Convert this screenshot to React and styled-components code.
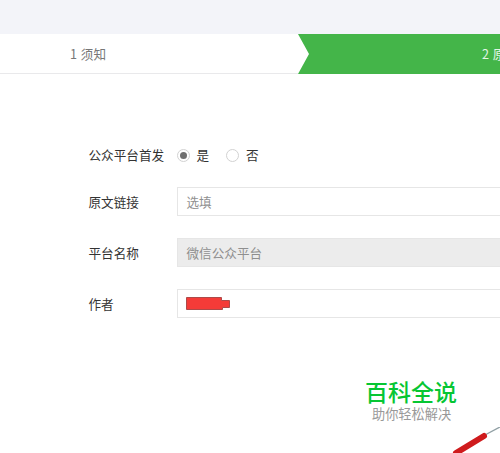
import React from "react";
import styled, { createGlobalStyle } from "styled-components";

const GlobalStyle = createGlobalStyle`
	* {
		box-sizing: border-box;
	}
	body {
		margin: 0;
		overflow: hidden;
		background: #fff;
		font-family: "Noto Sans CJK SC", sans-serif;
		font-size: 12.6px;
		color: #333;
	}
`;

const Page = styled.div`
	position: relative;
	width: 500px;
	height: 453px;
	overflow: hidden;
`;

const TopBand = styled.div`
	height: 34px;
	background: #f3f4f9;
`;

const Steps = styled.div`
	display: flex;
	height: 40px;
`;

const Step = styled.div`
	flex: none;
	width: ${(p) => (p.$active ? "202px" : "298px")};
	padding-left: ${(p) => (p.$active ? "184px" : "70px")};
	line-height: 40px;
	word-spacing: 1px;
	white-space: nowrap;
	overflow: hidden;
	color: ${(p) => (p.$active ? "#e4f6e4" : "#777")};
	background: ${(p) => (p.$active ? "#44b549" : "#fff")};
	border: solid ${(p) => (p.$active ? "#5aa65e" : "#e9e9eb")};
	border-width: ${(p) => (p.$active ? "0" : "0 0 1px")};
	clip-path: ${(p) =>
		p.$active ? "polygon(0 0, 100% 0, 100% 100%, 0 100%, 11px 50%)" : "none"};
`;

const Form = styled.form`
	display: flex;
	flex-direction: column;
	gap: 22px;
	padding: 71px 0 0 88.5px;
`;

const Row = styled.div`
	display: flex;
	align-items: center;
	height: ${(p) => p.$height || "29px"};
`;

const Label = styled.label`
	flex: none;
	width: 88px;
	line-height: 18px;
	white-space: nowrap;
`;

const Field = styled.div`
	flex: 1;
	display: flex;
	align-items: center;
	height: 29px;
	padding-left: 9px;
	border: 1px solid #e6e6e6;
	border-right: none;
	background: ${(p) => (p.$disabled ? "#ececec" : "#fff")};
	color: #8f8f8f;
`;

const Option = styled.span`
	display: flex;
	align-items: center;
	gap: 7px;
	margin-right: 17px;
	line-height: 18px;
`;

const Radio = styled.span`
	display: grid;
	place-items: center;
	width: 13px;
	height: 13px;
	border: 1px solid #d2d2d2;
	border-radius: 50%;

	&::after {
		content: "";
		width: 7px;
		height: 7px;
		border-radius: 50%;
		background: ${(p) => (p.$checked ? "#707070" : "transparent")};
	}
`;

const Redacted = styled.svg`
	display: block;
	margin-left: -1px;
`;

const Watermark = styled.div`
	position: absolute;
	left: 365px;
	top: 374px;
	white-space: nowrap;
`;

const Brand = styled.div`
	font-size: 23px;
	font-weight: 500;
	line-height: 34px;
	color: #06c633;
`;

const Slogan = styled.div`
	padding-left: 7px;
	font-size: 13.2px;
	line-height: 11px;
	color: #999;
`;

const Pen = styled.svg`
	position: absolute;
	right: 0;
	bottom: 0;
`;

const options = [
	{ text: "是", checked: true },
	{ text: "否", checked: false },
];

const App = () => {
	return (
		<Page>
			<GlobalStyle />
			<TopBand />
			<Steps>
				<Step>1 须知</Step>
				<Step $active>2 原</Step>
			</Steps>
			<Form>
				<Row $height="20px">
					<Label>公众平台首发</Label>
					{options.map((el) => (
						<Option key={el.text}>
							<Radio $checked={el.checked} />
							{el.text}
						</Option>
					))}
				</Row>
				<Row>
					<Label>原文链接</Label>
					<Field>选填</Field>
				</Row>
				<Row>
					<Label>平台名称</Label>
					<Field $disabled>微信公众平台</Field>
				</Row>
				<Row>
					<Label>作者</Label>
					<Field>
						<Redacted width="44" height="15">
							<path
								d="M.5 1.5h35v3h8v7h-7v2h-36z"
								fill="#f43b38"
								stroke="#ad4a49"
							/>
						</Redacted>
					</Field>
				</Row>
			</Form>
			<Watermark>
				<Brand>百科全说</Brand>
				<Slogan>助你轻松解决</Slogan>
			</Watermark>
			<Pen width="50" height="26" viewBox="0 0 50 26">
				<path d="M34 8.5L50 0" stroke="#91a0a5" strokeWidth="1.4" />
				<path d="M6 26L34 9" stroke="#cf1b1d" strokeWidth="6" strokeLinecap="round" />
			</Pen>
		</Page>
	);
};

export default App;
